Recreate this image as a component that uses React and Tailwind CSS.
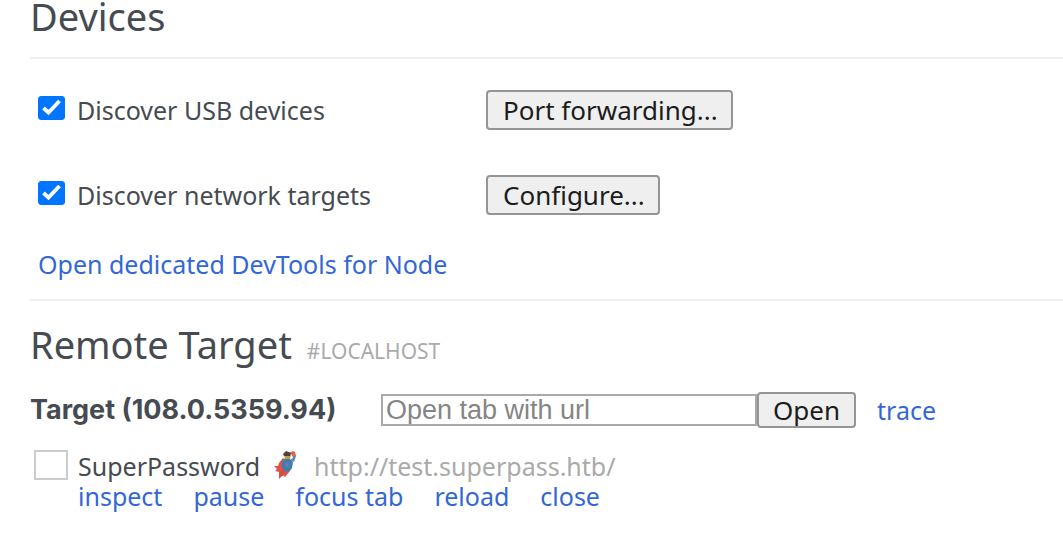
import React, { useState } from "react";

const actions = ["inspect", "pause", "focus tab", "reload", "close"];

function Discover({ id, label, action }) {
  const [checked, setChecked] = useState(true);

  return (
    <div className="flex h-10 items-center">
      <div className="flex w-[456px] items-center pb-1 pl-2">
        <span className="grid shrink-0">
          <input
            id={id}
            type="checkbox"
            checked={checked}
            onChange={() => setChecked(!checked)}
            className="peer col-start-1 row-start-1 h-6 w-[27px] appearance-none rounded-[3px] border border-[#767676] bg-white checked:border-[#0075ff] checked:bg-[#0075ff]"
          />
          <svg viewBox="0 0 27 24" className="pointer-events-none invisible col-start-1 row-start-1 h-6 w-[27px] peer-checked:visible" aria-hidden="true">
            <path d="M5.5 12 L10.5 16.5 L21.5 5" fill="none" stroke="white" strokeWidth="3.8" />
          </svg>
        </span>
        <label htmlFor={id} className="pl-3 pt-1">{label}</label>
      </div>
      <button className="h-10 rounded-sm border-2 border-[#959595] bg-[#efefef] pl-[15px] pr-[13px] text-[26px] leading-8 text-[#1c1c1c]">
        {action}
      </button>
    </div>
  );
}

function HeroIcon() {
  return (
    <svg viewBox="8 6 24 32" className="ml-[13px] h-8 w-6" aria-hidden="true">
      <path d="M18 14 L14 19 L13 22 L9 22 L12 25 L10 27 L14 28 L14 35 L18 31 L20 33 L25 27 L27 24 L25 18 Z" fill="#dc5548" />
      <path d="M19 15 L25 15 L28 18 L27 24 L23 28 L19 27 L17 23 L17 18 Z" fill="#3d7fb5" />
      <path d="M25 16 L28 14 L27 10 L29 9 L31 12 L29 18 Z" fill="#5d88b0" />
      <path d="M24 9 L28 7 L30 8 L31 12 L28 12 Z" fill="#dd6258" />
      <path d="M19 11 L26 11 L25 15 L20 15 Z" fill="#c99a38" />
      <path d="M18 10 L21 7 L26 9 L25 12 L19 12 Z" fill="#51423a" />
      <path d="M20 19 L24 19 L23 23 L21 23 Z" fill="#8076a0" />
      <path d="M17 25 L20 27 L18 32 L15 32 Z" fill="#df4a3c" />
    </svg>
  );
}

export default function App() {
  const [url, setUrl] = useState("");
  const [selected, setSelected] = useState(false);

  return (
    <main className="min-h-screen bg-white pl-[30px] font-['Noto_Sans','Open_Sans',sans-serif] text-[25px] leading-8 text-[#454b51]">
      <section className="pb-[19px]">
        <h2 className="pb-[25px] text-[38px] leading-8">Devices</h2>
        <div className="flex flex-col gap-[45px] border-t-2 border-[#efefef] pb-[33px] pt-[31px]">
          <Discover id="usb" label="Discover USB devices" action="Port forwarding..." />
          <Discover id="network" label="Discover network targets" action="Configure..." />
        </div>
        <a href="#node" className="block w-fit pl-2 text-[#3367d6]">Open dedicated DevTools for Node</a>
      </section>

      <section className="border-t-2 border-[#efefef] pt-[19px]">
        <h2 className="flex items-baseline gap-[15px] text-[38px] leading-12">
          Remote Target
          <span className="text-[21px] text-[#aaaaaa]">#LOCALHOST</span>
        </h2>

        <div className="flex items-center pt-[17px]">
          <label htmlFor="url" className="w-[351px] font-['Inter',sans-serif] text-[27px] font-bold">Target (108.0.5359.94)</label>
          <input
            id="url"
            type="text"
            value={url}
            onChange={(e) => setUrl(e.target.value)}
            placeholder="Open tab with url"
            className="h-8 w-[376px] border-2 border-[#a9a9a9] px-[3px] font-['Liberation_Sans',Arial,sans-serif] text-[27px] text-black placeholder:text-[#858585]"
          />
          <button className="h-9 rounded-sm border-2 border-[#959595] bg-[#efefef] px-[14px] text-[26px] leading-8 text-[#1c1c1c]">Open</button>
          <a href="#trace" className="pl-[21px] text-[#3367d6]">trace</a>
        </div>

        <div className="flex items-start gap-[10px] pl-1 pt-[22px]">
          <input
            type="checkbox"
            aria-label="SuperPassword"
            checked={selected}
            onChange={() => setSelected(!selected)}
            className="h-[30px] w-[34px] shrink-0 appearance-none border-2 border-[#cccccc] bg-white checked:bg-[#0075ff]"
          />
          <div>
            <div className="flex items-center leading-8">
              <span>SuperPassword</span>
              <HeroIcon />
              <span className="pl-[17px] text-[#aaaaaa]">http://test.superpass.htb/</span>
            </div>
            <div className="flex gap-[31px] leading-7 text-[#3367d6]">
              {actions.map((name) => (
                <a key={name} href={`#${name}`}>{name}</a>
              ))}
            </div>
          </div>
        </div>
      </section>
    </main>
  );
}
